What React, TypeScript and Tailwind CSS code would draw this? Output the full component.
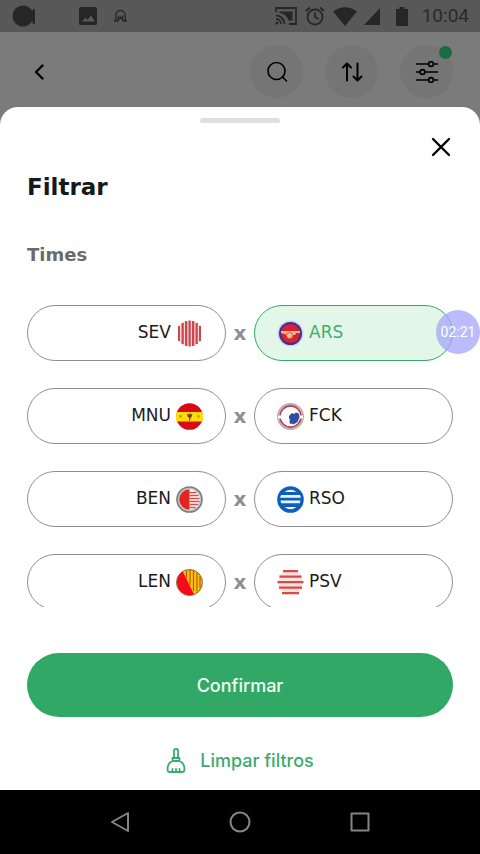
import type { ReactNode } from "react";

const ink = "#262626";

const crests: Record<string, ReactNode> = {
  SEV: (
    <>
      <path d="M7 1.500h13l5 5v14l-5 5H7l-5-5v-14z" fill="#f7dedd" />
      <path d="M2 6h2v15H2zM5.500 3h2.300v21H5.500zM9 1h2.300v25H9zM12.500 .5h2.300v26h-2.300zM16 1h2.300v25H16zM19.500 3h2.300v21h-2.300zM23 6h2v15h-2z" fill="#cc4650" />
    </>
  ),
  ARS: (
    <>
      <circle cx="13.5" cy="13.5" r="13" fill="#d3cfe8" />
      <circle cx="13.5" cy="13.5" r="11.5" fill="#353591" />
      <circle cx="13.5" cy="13.5" r="9.5" fill="#df1f30" />
      <path d="M4 11h19v2h-4l-1 2h-2a3 3 0 0 1-6 1l-2-2-4-1z" fill="#efbd91" />
      <circle cx="12.5" cy="15.5" r="3" fill="#efbd91" stroke="#b74b43" strokeWidth=".8" />
    </>
  ),
  MNU: (
    <>
      <circle cx="13.5" cy="13.5" r="13.3" fill="#d80b15" />
      <path d="M.8 9h25.4a13 13 0 0 1 0 9.5H.8A13 13 0 0 1 .8 9z" fill="#ffde0b" />
      <path d="M11 10.500l2 1 1-1.500 1 1.500 1.500-.5-1 3-1 1-.5 3-1-.5.3-2.500-1.800-1.500z" fill="#9b2f18" />
      <circle cx="4.500" cy="13.500" r="1.400" fill="#e48b18" />
      <circle cx="22.500" cy="13.500" r="1.400" fill="#e48b18" />
    </>
  ),
  FCK: (
    <>
      <circle cx="13.5" cy="13.5" r="12.5" fill="#fff" stroke="#b5afb8" strokeWidth="2" />
      <circle cx="13.5" cy="13.5" r="10.6" fill="#fff" stroke="#c5394b" strokeWidth="1.600" />
      <path d="M1 12.500h3v3H1zM23 12.500h3v3h-3z" fill="#fff" />
      <path d="M12 13l3-3 2 1 2-1.500 3 1 .5 4-2 4.500-4 2.500-2-1-1.500.5-.5-2.500.5-2-1-1z" fill="#2f4fa0" />
    </>
  ),
  BEN: (
    <>
      <circle cx="13.5" cy="13.5" r="12.500" fill="#bfc3c5" stroke="#777e82" strokeWidth="1.600" />
      <circle cx="13.5" cy="13.5" r="10.300" fill="#fff" />
      <path d="M13.500 3.200a10.300 10.300 0 0 0 0 20.600z" fill="#e5251d" />
      <path d="M13.500 6.500h7M13.500 9.500h9M13.500 12.500h10M13.500 15.500h10M13.500 18.500h8.500M13.500 21.500h6" stroke="#e34a43" strokeWidth="1.500" />
    </>
  ),
  RSO: (
    <>
      <circle cx="13.5" cy="13.5" r="13.3" fill="#0d5fbd" />
      <path d="M7.500 6q6-4.500 12 0zM4 9h19l1 2.700H3zM3.500 14.500h20l-.7 2.800H4.200zM7.500 21h12q-6 4.500-12 0z" fill="#e9f3ff" />
    </>
  ),
  LEN: (
    <>
      <circle cx="13.5" cy="13.5" r="13" fill="#fbc010" stroke="#654e2c" strokeWidth=".8" />
      <path d="M10.500 1.500V9M14 1v15M17.500 1.500V22M21 3.500v19M24 7v12" stroke="#b65b12" strokeWidth="1.200" />
      <path d="M6.800 2.400L18 25.600A13 13 0 0 1 6.800 2.400z" fill="#f5091b" />
    </>
  ),
  PSV: (
    <>
      <path d="M7 1h13l5 6 1 7-2 7-4 4H7l-5-5-1-6 1-7z" fill="#fbe3df" />
      <path d="M6 2.200h15M2.500 7.700h22M.5 13.200h26M2 18.700h23M5 24.200h17" stroke="#d9494c" strokeWidth="2.300" />
    </>
  ),
};

const matches = [
  { home: "SEV", away: "ARS" },
  { home: "MNU", away: "FCK" },
  { home: "BEN", away: "RSO" },
  { home: "LEN", away: "PSV" },
];

const Crest = ({ team }: { team: string }) => (
  <svg width="27" height="27" viewBox="0 0 27 27" className="shrink-0">
    {crests[team]}
  </svg>
);

const StatusBar = () => (
  <div className="flex h-8 shrink-0 items-center justify-between bg-[#585858] pl-3 pr-[11px]">
    <div className="flex items-center">
      <svg width="24" height="22" viewBox="0 0 24 22" fill={ink}>
        <circle cx="11" cy="11" r="10.500" />
        <path d="M17 8l3-1 1-3h2v15h-2l-1-3-3-1z" />
      </svg>
      <svg width="18" height="18" viewBox="0 0 18 18" className="ml-[43px]">
        <rect width="18" height="18" rx="1.500" fill={ink} />
        <path d="M3 14.500l3.500-4 2 2.500 3.500-4.500 4 6z" fill="#585858" />
      </svg>
      <svg width="15" height="14" viewBox="0 0 15 14" fill="none" stroke={ink} strokeWidth="1.300" strokeLinejoin="round" className="ml-4">
        <path d="M1.500 12q1.500-1.500 1.500-6a4.500 4.500 0 0 1 9 0q0 4.500 1.500 6H10.500L7.500 8l-3 4z" />
        <path d="M4.500 12q1-3 1-5.500M10.500 12q-1-3-1-5.500" />
      </svg>
    </div>
    <div className="flex items-center">
      <svg width="22" height="18" viewBox="0 0 22 18" fill="none" stroke={ink} strokeWidth="1.800">
        <path d="M1 5V1h20v16h-7M1 8.500a8.500 8.500 0 0 1 8.500 8.500M1 12a5 5 0 0 1 5 5" />
        <path d="M4.500 4.500h13v9h-4C12 9 9 6.500 4.500 6z" fill={ink} stroke="none" />
        <circle cx="2" cy="16" r="1.500" fill={ink} stroke="none" />
      </svg>
      <svg width="20" height="20" viewBox="0 0 20 20" fill="none" stroke={ink} strokeWidth="1.800" className="ml-2">
        <circle cx="10" cy="11" r="7.500" />
        <path d="M10 6.500V11l3.500 2M1 5l4-3.500M19 5l-4-3.500" />
      </svg>
      <svg width="24" height="19" viewBox="0 0 24 19" fill={ink} className="ml-2">
        <path d="M0 4.500Q12-4 24 4.500L12 19z" />
      </svg>
      <svg width="16" height="17" viewBox="0 0 16 17" fill={ink} className="ml-[7px]">
        <path d="M16 0v17H0z" />
      </svg>
      <svg width="12" height="19" viewBox="0 0 12 19" fill={ink} className="ml-4">
        <path d="M3.500 0h5v2H12v17H0V2h3.500z" />
      </svg>
      <span className="ml-[14px] font-[Roboto] text-[19px] leading-6 text-[#2a2a2a]">10:04</span>
    </div>
  </div>
);

const Header = () => (
  <header className="flex h-[75px] shrink-0 items-center justify-between px-[27px] pt-1">
    <button aria-label="Voltar" className="flex h-10 w-6 items-center justify-center">
      <svg width="10" height="16" viewBox="0 0 10 16" fill="none" stroke="black" strokeWidth="2.300" strokeLinecap="round" strokeLinejoin="round">
        <path d="M8.500 1.500L2 8l6.500 6.500" />
      </svg>
    </button>
    <div className="flex gap-[22px]">
      <button aria-label="Buscar" className="flex size-[53px] items-center justify-center rounded-full bg-[#757575]">
        <svg width="22" height="22" viewBox="0 0 22 22" fill="none" stroke="black" strokeWidth="1.600" strokeLinecap="round">
          <circle cx="10.500" cy="10" r="8.500" />
          <path d="M16.500 16l4 4" />
        </svg>
      </button>
      <button aria-label="Ordenar" className="flex size-[53px] items-center justify-center rounded-full bg-[#757575]">
        <svg width="22" height="20" viewBox="0 0 22 20" fill="none" stroke="black" strokeWidth="2" strokeLinecap="round" strokeLinejoin="round">
          <path d="M6 18.500V1.500M2 5.500l4-4 4 4M16.500 1.500v17M12.500 14.500l4 4 4-4" />
        </svg>
      </button>
      <button aria-label="Filtrar" className="relative flex size-[53px] items-center justify-center rounded-full bg-[#757575]">
        <svg width="24" height="22" viewBox="0 0 24 22" fill="none" stroke="black" strokeWidth="1.600" strokeLinecap="round">
          <path d="M1.500 3H13.500M18.500 3h4M1.500 11H5M10 11h12.500M1.500 19H13.500M18.500 19h4" />
          <circle cx="16" cy="3" r="2.400" />
          <circle cx="7.500" cy="11" r="2.400" />
          <circle cx="16" cy="19" r="2.400" />
        </svg>
        <span className="absolute right-px top-px size-[13px] rounded-full bg-[#1a6b42]" />
      </button>
    </div>
  </header>
);

export default function App() {
  return (
    <main className="flex h-screen flex-col overflow-hidden bg-[#7b7b7b]">
      <StatusBar />
      <Header />

      <section className="relative flex min-h-0 flex-1 flex-col rounded-t-[18px] bg-white px-[27px]">
        <div className="mt-[11px] h-[5px] w-20 shrink-0 self-center rounded-sm bg-[#dfdfdf]" />
        <button aria-label="Fechar" className="mt-3 flex size-6 shrink-0 items-center justify-center self-end">
          <svg width="20" height="20" viewBox="0 0 20 20" fill="none" stroke="black" strokeWidth="2.400" strokeLinecap="round">
            <path d="M2 2l16 16M18 2L2 18" />
          </svg>
        </button>
        <h1 className="mt-3 font-['DejaVu_Sans'] text-[23px] font-bold leading-8 text-[#14191b]">Filtrar</h1>
        <h2 className="mt-10 font-['DejaVu_Sans'] text-[18px] font-bold leading-6 text-[#6b6b6b]">Times</h2>

        <div className="mt-[38px] flex min-h-0 flex-1 flex-col gap-[27px] overflow-hidden font-['DejaVu_Sans'] text-[17px] text-[#1c1c1c]">
          {matches.map((match) => (
            <div key={match.home} className="flex shrink-0 items-center">
              <button className="flex h-14 flex-1 items-center justify-end gap-[5px] rounded-full border border-[#8f8f8f] pr-[22px]">
                {match.home}
                <Crest team={match.home} />
              </button>
              <span className="w-7 text-center text-[20px] font-bold leading-6 text-[#8f8f8f]">x</span>
              <button
                aria-pressed={match.away === "ARS"}
                className="flex h-14 flex-1 items-center gap-[5px] rounded-full border border-[#8f8f8f] pl-[22px] aria-pressed:border-[#30a866] aria-pressed:bg-[#e3f7e8] aria-pressed:text-[#41ad70]"
              >
                <Crest team={match.away} />
                {match.away}
              </button>
            </div>
          ))}
        </div>

        <button className="mt-[46px] h-16 shrink-0 rounded-full bg-[#32a866] font-[Inter] text-[18px] font-medium text-[#effff3]">
          Confirmar
        </button>
        <button className="mb-3 mt-[25px] flex h-9 shrink-0 items-center justify-center gap-[14px] font-[Inter] text-[18px] font-medium text-[#3caa6e]">
          <svg width="20" height="25" viewBox="0 0 20 25" fill="none" stroke="currentColor" strokeWidth="1.800" strokeLinejoin="round" strokeLinecap="round">
            <path d="M8 10V2.500Q8 1 10 1t2 1.500V10M6.500 13V10h7v3M6.500 13Q1.500 15 1.500 21.500q0 2.500 2.500 2.500h12q2.500 0 2.500-2.500 0-6.500-5-8.500zM6.500 23.500v-2.500M10 23.500v-2.500M13.500 23.500v-2.500" />
          </svg>
          Limpar filtros
        </button>

        <div className="absolute right-0 top-[203px] flex size-11 items-center justify-center rounded-full bg-[#a5a4fa]/75 font-[Roboto] text-[14px] text-white">
          02:21
        </div>
      </section>

      <nav className="flex h-16 shrink-0 items-center justify-center gap-24 bg-black text-[#858585]">
        <button aria-label="Voltar">
          <svg width="24" height="24" viewBox="0 0 24 24" fill="none" stroke="currentColor" strokeWidth="2" strokeLinejoin="round">
            <path d="M20 3v18L4 12z" />
          </svg>
        </button>
        <button aria-label="Início">
          <svg width="24" height="24" viewBox="0 0 24 24" fill="none" stroke="currentColor" strokeWidth="2">
            <circle cx="12" cy="12" r="9.500" />
          </svg>
        </button>
        <button aria-label="Recentes">
          <svg width="24" height="24" viewBox="0 0 24 24" fill="none" stroke="currentColor" strokeWidth="2" strokeLinejoin="round">
            <rect x="3.500" y="3.500" width="17" height="17" />
          </svg>
        </button>
      </nav>
    </main>
  );
}
